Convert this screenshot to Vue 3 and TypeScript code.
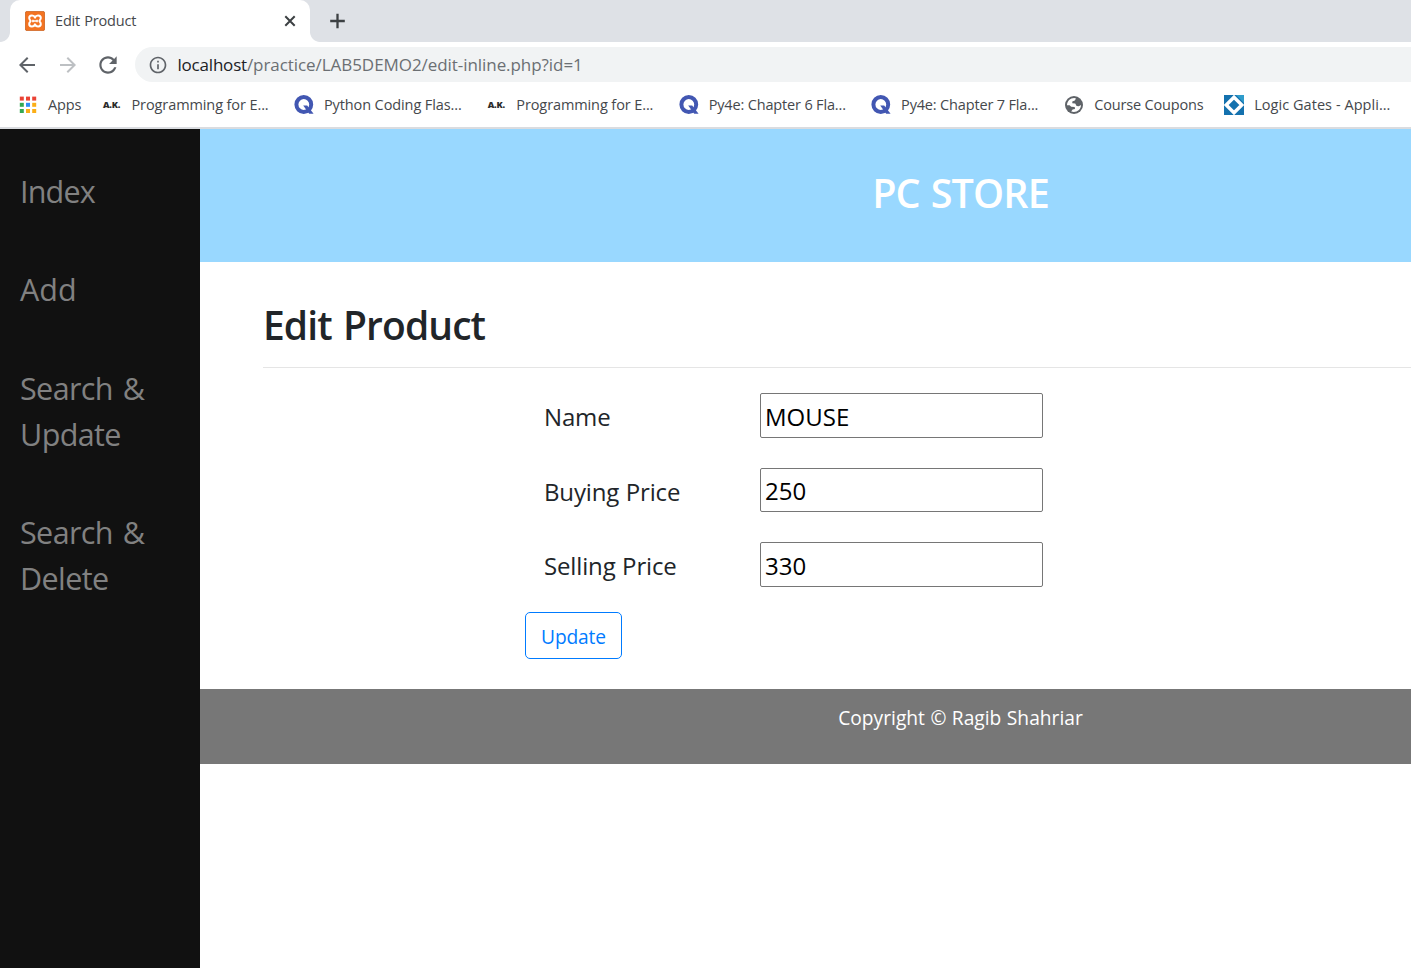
<script setup lang="ts">
interface Bookmark {
  label: string
  icon: 'apps' | 'ak' | 'quizlet' | 'globe' | 'gates'
  slot: string
}

interface Field {
  id: string
  label: string
  value: string
}

const bookmarks: Bookmark[] = [
  { label: 'Apps', icon: 'apps', slot: 'w-apps' },
  { label: 'Programming for E...', icon: 'ak', slot: 'w-long' },
  { label: 'Python Coding Flas...', icon: 'quizlet', slot: 'w-long' },
  { label: 'Programming for E...', icon: 'ak', slot: 'w-long' },
  { label: 'Py4e: Chapter 6 Fla...', icon: 'quizlet', slot: 'w-long tight' },
  { label: 'Py4e: Chapter 7 Fla...', icon: 'quizlet', slot: 'w-last tight' },
  { label: 'Course Coupons', icon: 'globe', slot: 'w-course tight' },
  { label: 'Logic Gates - Appli...', icon: 'gates', slot: 'w-long loose' },
]

const links: string[][] = [['Index'], ['Add'], ['Search &', 'Update'], ['Search &', 'Delete']]

const fields: Field[] = [
  { id: 'name', label: 'Name', value: 'MOUSE' },
  { id: 'buying', label: 'Buying Price', value: '250' },
  { id: 'selling', label: 'Selling Price', value: '330' },
]

const gridColors = ['#ea4335', '#ea4335', '#ea4335', '#34a853', '#2f8df5', '#fbae17', '#34a853', '#fbae17', '#fbae17']
</script>

<template>
  <div class="window">
    <div class="tabstrip">
      <div class="tab">
        <svg class="favicon" viewBox="0 0 20 20">
          <rect x="0.4" y="0.4" width="19.2" height="19.2" rx="1.6" fill="#f37321" stroke="#c9601c" stroke-width="0.8" />
          <path d="M10 6.600C9 3.800 4.200 3.900 4.200 7.100C4.200 8.800 5.600 9.200 5.600 10C5.600 10.800 4.200 11.200 4.200 12.900C4.200 16.100 9 16.200 10 13.400C11 16.200 15.800 16.100 15.800 12.900C15.800 11.200 14.400 10.800 14.400 10C14.400 9.200 15.800 8.800 15.800 7.100C15.800 3.900 11 3.800 10 6.600Z" fill="none" stroke="#fff" stroke-width="2" stroke-linejoin="round" />
          <path d="M7.900 10H12.100M7.900 8.700V11.300M12.100 8.700V11.300" stroke="#fff" stroke-width="1.500" />
        </svg>
        <span class="tab-title">Edit Product</span>
        <svg class="close" viewBox="0 0 12 12"><path d="M1.300 1.300L10.700 10.700M10.700 1.300L1.300 10.700" stroke="#3c4043" stroke-width="2" /></svg>
      </div>
      <svg class="plus" viewBox="0 0 16 16"><path d="M7.500 0.700V15.300M0.200 8H14.800" stroke="#3c4043" stroke-width="2.300" /></svg>
    </div>

    <div class="toolbar">
      <svg class="nav" viewBox="0 0 24 24"><path fill="#5f6368" d="M20 11H7.83l5.59-5.59L12 4l-8 8 8 8 1.41-1.41L7.83 13H20v-2z" /></svg>
      <svg class="nav forward" viewBox="0 0 24 24"><path fill="#bdc0c3" d="M4 13h12.17l-5.59 5.59L12 20l8-8-8-8-1.41 1.41L16.17 11H4v2z" /></svg>
      <svg class="nav reload" viewBox="0 0 24 24"><path fill="#5f6368" d="M17.65 6.35C16.2 4.9 14.21 4 12 4c-4.42 0-7.99 3.58-7.99 8s3.57 8 7.99 8c3.73 0 6.84-2.55 7.73-6h-2.08c-.82 2.33-3.04 4-5.65 4-3.31 0-6-2.69-6-6s2.69-6 6-6c1.66 0 3.14.69 4.22 1.78L13 11h7V4l-2.35 2.35z" /></svg>
      <div class="omnibox">
        <svg class="info" viewBox="0 0 24 24"><path fill="#5f6368" d="M11 7h2v2h-2zm0 4h2v6h-2zm1-9C6.48 2 2 6.48 2 12s4.48 10 10 10 10-4.48 10-10S17.52 2 12 2zm0 18c-4.41 0-8-3.59-8-8s3.59-8 8-8 8 3.59 8 8-3.59 8-8 8z" /></svg>
        <span class="url"><span class="host">localhost</span>/practice/LAB5DEMO2/edit-inline.php?id=1</span>
      </div>
    </div>

    <div class="bookmarks">
      <div v-for="(b, i) in bookmarks" :key="i" class="bookmark" :class="b.slot">
        <svg v-if="b.icon === 'apps'" class="bm-icon" viewBox="0 0 20 20">
          <rect v-for="(c, k) in gridColors" :key="k" :x="1.8 + (k % 3) * 6.2" :y="1.6 + Math.floor(k / 3) * 6.2" width="4" height="4" :fill="c" />
        </svg>
        <span v-else-if="b.icon === 'ak'" class="bm-icon ak">A.K.</span>
        <svg v-else-if="b.icon === 'quizlet'" class="bm-icon" viewBox="0 0 20 20">
          <circle cx="9.8" cy="9.5" r="7.4" fill="none" stroke="#4257b2" stroke-width="4" />
          <path d="M9.200 10.600H13.200L19.600 18.800H15.200Z" fill="#4257b2" />
        </svg>
        <svg v-else-if="b.icon === 'globe'" class="bm-icon" viewBox="-1 -1 20 20">
          <circle cx="9" cy="9" r="9" fill="#5f6368" />
          <path d="M2 9.200C2 5.200 5.200 2 9.300 2L11 2.400L9.800 4.600L7.300 5.400V7.300L10.200 7.500L11.600 9.900L13.800 10.300L16 9C16 13 12.800 16 8.800 16L6.200 15.400L7.600 13.600L10 12.900L9.700 11L6.200 10.800L4.600 9.200Z" fill="#fff" />
        </svg>
        <svg v-else class="bm-icon" viewBox="0 0 20 20">
          <rect width="20" height="20" fill="#1471ae" />
          <path d="M12 0H20V8Z" fill="#2f9ccb" />
          <path d="M10 2.200L17.800 10L10 17.800L2.200 10Z" fill="#1471ae" stroke="#fff" stroke-width="3.400" />
        </svg>
        <span class="bm-label">{{ b.label }}</span>
      </div>
    </div>

    <div class="page">
      <nav class="sidebar">
        <a v-for="(lines, i) in links" :key="i" class="side-link">
          <span v-for="l in lines" :key="l" class="side-line">{{ l }}</span>
        </a>
      </nav>
      <main class="content">
        <header class="banner">PC STORE</header>
        <section class="panel">
          <h1 class="heading">Edit Product</h1>
          <form class="form" @submit.prevent>
            <div v-for="f in fields" :key="f.id" class="row">
              <label class="label" :for="f.id">{{ f.label }}</label>
              <input :id="f.id" class="input" type="text" :value="f.value" />
            </div>
            <button class="update" type="button">Update</button>
          </form>
        </section>
        <footer class="footer">Copyright © Ragib Shahriar</footer>
      </main>
    </div>
  </div>
</template>

<style>
body {
  margin: 0;
  overflow: hidden;
  background: #fff;
}
</style>

<style scoped>
.window {
  width: 1411px;
  height: 968px;
  overflow: hidden;
  display: flex;
  flex-direction: column;
  background: #fff;
  font-family: 'Open Sans', 'Noto Sans', sans-serif;
}
svg {
  display: block;
  flex: none;
}
.tabstrip {
  height: 42px;
  flex: none;
  display: flex;
  align-items: center;
  background: #dee1e6;
  padding-left: 10px;
}
.tab {
  position: relative;
  width: 300px;
  height: 42px;
  box-sizing: border-box;
  display: flex;
  align-items: center;
  padding: 0 14px 0 15px;
  background: #fff;
  border-radius: 10px 10px 0 0;
}
.tab::before,
.tab::after {
  content: '';
  position: absolute;
  bottom: 0;
  width: 10px;
  height: 10px;
}
.tab::before {
  left: -10px;
  background: radial-gradient(circle at 0 0, #dee1e6 9.5px, #fff 10.3px);
}
.tab::after {
  right: -10px;
  background: radial-gradient(circle at 100% 0, #dee1e6 9.5px, #fff 10.3px);
}
.favicon {
  width: 20px;
  height: 20px;
}
.tab-title {
  flex: 1;
  margin-left: 10px;
  font-size: 14.5px;
  line-height: 20px;
  letter-spacing: -0.16px;
  word-spacing: 0.5px;
  color: #45484c;
  margin-top: -1px;
}
.close {
  width: 12px;
  height: 12px;
}
.plus {
  width: 16px;
  height: 16px;
  margin-left: 20px;
}
.toolbar {
  height: 45px;
  flex: none;
  display: flex;
  align-items: center;
  padding-left: 15px;
}
.nav {
  width: 24px;
  height: 24px;
  margin-right: 17px;
}
.forward {
  margin-right: 15px;
}
.reload {
  width: 26px;
  height: 26px;
  margin: 0 14px 0 0;
}
.omnibox {
  flex: 1;
  height: 35px;
  display: flex;
  align-items: center;
  background: #f1f3f4;
  border-radius: 17.5px 0 0 17.5px;
  padding-left: 12.5px;
}
.info {
  width: 20px;
  height: 20px;
}
.url {
  margin-left: 10px;
  font-size: 17px;
  line-height: 24px;
  letter-spacing: -0.06px;
  color: #6b6f73;
  white-space: nowrap;
}
.host {
  color: #202124;
  letter-spacing: -0.2px;
}
.bookmarks {
  height: 42px;
  flex: none;
  display: flex;
  align-items: flex-start;
  padding: 7.5px 0 0 18px;
  box-sizing: border-box;
  border-bottom: 2px solid #dadce0;
}
.bookmark {
  flex: none;
  display: flex;
  align-items: center;
  height: 20px;
  letter-spacing: -0.1px;
}
.tight {
  letter-spacing: -0.16px;
}
.loose {
  letter-spacing: 0.05px;
}
.w-apps {
  width: 83.5px;
}
.w-long {
  width: 192.4px;
}
.w-last {
  width: 193.1px;
}
.w-course {
  width: 160px;
}
.bm-icon {
  width: 20px;
  height: 20px;
  margin-right: 10px;
}
.ak {
  font-size: 9px;
  font-weight: 800;
  line-height: 20px;
  letter-spacing: -0.2px;
  text-align: center;
  color: #2b2b2b;
}
.bm-label {
  font-size: 14.5px;
  line-height: 20px;
  color: #45484c;
  white-space: nowrap;
}
.page {
  flex: 1;
  display: flex;
}
.sidebar {
  width: 200px;
  flex: none;
  box-sizing: border-box;
  background: #111;
  padding: 38.6px 0 0 20px;
}
.side-link {
  display: block;
  margin-bottom: 52.6px;
  font-size: 30.5px;
  line-height: 46px;
  letter-spacing: -0.6px;
  word-spacing: 2.5px;
  color: #818181;
}
.side-link:nth-child(1) {
  letter-spacing: -0.8px;
}
.side-link:nth-child(2) {
  letter-spacing: 0;
}
.side-line {
  display: block;
}
.content {
  width: 1521px;
  flex: none;
}
.banner {
  height: 133px;
  box-sizing: border-box;
  padding-top: 39.5px;
  background: #99d8ff;
  color: #fff;
  font-size: 39.5px;
  font-weight: 600;
  line-height: 48px;
  letter-spacing: -0.85px;
  word-spacing: 1.5px;
  text-align: center;
}
.panel {
  height: 427px;
  box-sizing: border-box;
  padding: 38.5px 0 0 63px;
}
.heading {
  margin: 0;
  height: 66px;
  font-size: 39px;
  font-weight: 600;
  line-height: 48px;
  letter-spacing: -0.9px;
  word-spacing: 2px;
  color: #212529;
  border-bottom: 1px solid #e5e5e5;
}
.form {
  padding: 25.5px 0 0 262px;
}
.row {
  display: flex;
  align-items: center;
  height: 44.67px;
  margin-bottom: 30px;
}
.label {
  width: 216px;
  padding: 3.4px 0 0 19px;
  box-sizing: border-box;
  margin-right: 19px;
  font-size: 24px;
  line-height: 36px;
  letter-spacing: -0.15px;
  word-spacing: 0.5px;
  color: #212529;
  white-space: nowrap;
}
.input {
  width: 283px;
  height: 44.67px;
  box-sizing: border-box;
  border: 1px solid #767676;
  border-radius: 2px;
  background: #fff;
  padding: 3px 4px 1px;
  font-family: inherit;
  font-size: 24px;
  color: #000;
}
.update {
  display: block;
  margin-top: -5px;
  width: 97px;
  height: 47px;
  box-sizing: border-box;
  padding: 3px 0 0;
  border: 1px solid #007bff;
  border-radius: 5px;
  background: #fff;
  color: #007bff;
  font-family: inherit;
  font-size: 19.2px;
  line-height: 28px;
  letter-spacing: -0.15px;
}
.footer {
  height: 75px;
  box-sizing: border-box;
  padding-top: 14.5px;
  background: #777;
  color: #fff;
  font-size: 19.2px;
  line-height: 28px;
  word-spacing: 0.5px;
  text-align: center;
}
</style>
